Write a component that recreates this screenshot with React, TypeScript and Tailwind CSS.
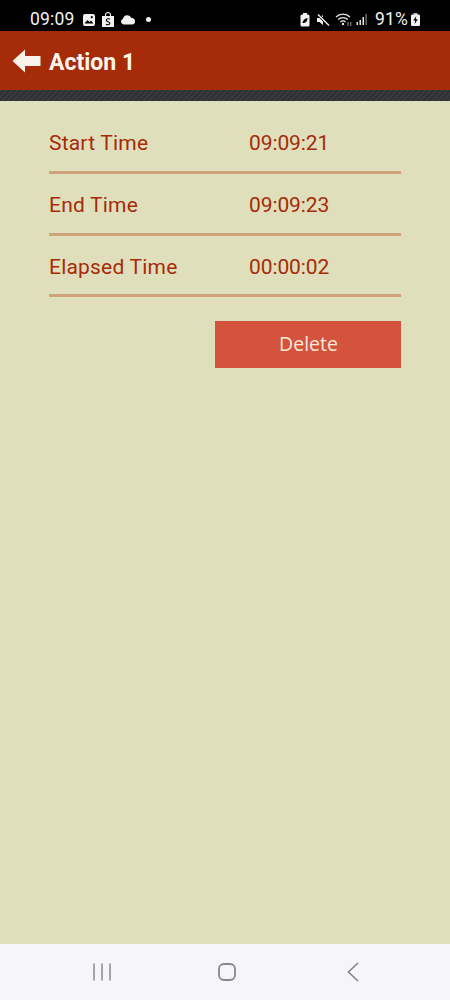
import React from "react";

function StatusBar() {
  return (
    <div className="h-[31px] bg-black text-[#f2f2f2] flex items-center pt-[8px] pl-[30px] pr-[30px] font-['Roboto',sans-serif]">
      <span className="text-[17.5px] leading-none tracking-[0.2px]">09:09</span>
      <div className="flex items-center ml-[7px]">
        <svg width="14" height="14" viewBox="0 0 14 14">
          <rect x="1" y="1" width="12" height="12" rx="2" fill="#f2f2f2" />
          <path d="M2.5 10.5 L5.5 7 L7.5 9 L9 7.5 L11.5 10.5 Z" fill="#000" />
          <circle cx="9.8" cy="4.2" r="1.1" fill="#000" />
        </svg>
        <svg className="ml-[5px]" width="14" height="16" viewBox="0 0 14 16">
          <path d="M1 4 H13 V15 H1 Z" fill="#f2f2f2" />
          <path d="M4.5 4 V3 a2.5 2.5 0 0 1 5 0 V4" fill="none" stroke="#f2f2f2" strokeWidth="1.1" />
          <path d="M9 7.2 C8 6.4 5.3 6.5 5.3 8.2 C5.3 10 8.9 9.5 8.9 11.3 C8.9 13 6 13 5 12.2" fill="none" stroke="#000" strokeWidth="1.1" />
        </svg>
        <svg className="ml-[5px]" width="16" height="10" viewBox="0 0 16 10">
          <path d="M3.5 9.5 A3 3 0 0 1 3 3.7 A4.5 4.5 0 0 1 11.5 3 A3.3 3.3 0 0 1 12.5 9.5 Z" fill="#f2f2f2" />
        </svg>
        <span className="w-[5px] h-[5px] rounded-full bg-[#f2f2f2] ml-[10px]" />
      </div>
      <div className="flex items-center ml-auto">
        <svg width="10" height="14" viewBox="0 0 10 14">
          <rect x="3" y="0" width="4" height="2" fill="#f2f2f2" />
          <rect x="0.5" y="1.5" width="9" height="12" rx="1.5" fill="#f2f2f2" />
          <path d="M2.5 10 C3 7 5 5.5 7.5 5 C7.5 8 6 10 2.5 10 Z" fill="#000" />
        </svg>
        <svg className="ml-[6px]" width="14" height="14" viewBox="0 0 14 14">
          <path d="M1 5 H3.5 L7 2 V12 L3.5 9 H1 Z" fill="#f2f2f2" />
          <path d="M2 1.5 L13 12.5" stroke="#000" strokeWidth="3" />
          <path d="M2 1.5 L13 12.5" stroke="#f2f2f2" strokeWidth="1.4" />
        </svg>
        <svg className="ml-[5px]" width="19" height="15" viewBox="0 0 19 15">
          <path d="M1 5 A10 10 0 0 1 15 5" fill="none" stroke="#e8e8e8" strokeWidth="1.3" />
          <path d="M3.2 7.5 A7 7 0 0 1 12.8 7.5" fill="none" stroke="#e8e8e8" strokeWidth="1.3" />
          <path d="M5.4 10 A4 4 0 0 1 10.6 10" fill="none" stroke="#e8e8e8" strokeWidth="1.3" />
          <circle cx="8" cy="12" r="1.2" fill="#e8e8e8" />
          <path d="M13 10 V14 M15.8 14 V10" stroke="#999" strokeWidth="1" />
        </svg>
        <svg className="ml-[2px]" width="12" height="13" viewBox="0 0 12 13">
          <rect x="0.5" y="9" width="1.5" height="3" fill="#e8e8e8" />
          <rect x="3.5" y="7" width="1.5" height="5" fill="#e8e8e8" />
          <rect x="6.5" y="4" width="1.5" height="8" fill="#e8e8e8" />
          <rect x="9.5" y="1" width="1.2" height="11" fill="#888" />
        </svg>
        <span className="text-[17.5px] leading-none ml-[7px] tracking-[0.2px]">91%</span>
        <svg className="ml-[3px]" width="9" height="13" viewBox="0 0 9 13">
          <rect x="2.5" y="0" width="4" height="2" fill="#bbb" />
          <rect x="0" y="1.5" width="9" height="11.5" rx="1.3" fill="#f2f2f2" />
          <path d="M5.3 3 L2.3 7.5 H4.2 L3.7 11 L6.8 6.2 H4.8 Z" fill="#000" />
        </svg>
      </div>
    </div>
  );
}

function Row({ label, value, h }: { label: string; value: string; h: string }) {
  return (
    <div className={`${h} flex flex-col`}>
      <div className="flex-1 flex items-center pt-[5px] text-[21px] text-[#a62b08]">
        <span className="w-[200px] tracking-[0.2px]">{label}</span>
        <span className="tracking-[-0.1px]">{value}</span>
      </div>
      <div className="h-[3px] bg-[#cfa27c]" />
    </div>
  );
}

export default function App() {
  return (
    <div className="w-[450px] h-[1000px] flex flex-col bg-[#e0dfbb] font-['Roboto',sans-serif] overflow-hidden">
      <StatusBar />
      <div className="h-[59px] bg-[#a62b08] flex items-center pl-[12px]">
        <svg width="29" height="24" viewBox="0 0 29 24">
          <path d="M0.5 12 L13 0.5 V7 H28.5 V17 H13 V23.5 Z" fill="#f7f3ea" />
        </svg>
        <span className="ml-[8px] pt-[4px] text-[#fbf5ec] font-bold text-[23px] leading-none">Action 1</span>
      </div>
      <div className="h-[11px] bg-[#33363a] bg-[repeating-linear-gradient(135deg,#37393d_0px,#37393d_2px,#2f3135_2px,#2f3135_4px)]" />
      <div className="flex-1 px-[49px] pt-[11px]">
        <Row h="h-[62px]" label="Start Time" value="09:09:21" />
        <Row h="h-[62px]" label="End Time" value="09:09:23" />
        <Row h="h-[61px]" label="Elapsed Time" value="00:00:02" />
        <div className="flex justify-end mt-[24px]">
          <button className="w-[186px] h-[47px] pb-[2px] pl-[1px] bg-[#d3533d] text-[#f8e8dc] text-[19.5px] flex items-center justify-center font-['Open_Sans',sans-serif]">
            Delete
          </button>
        </div>
      </div>
      <div className="h-[56px] bg-[#f6f6fa] flex items-center pl-[92px] pb-[1px]">
        <svg width="20" height="18" viewBox="0 0 20 18">
          <path d="M2 0.5 V17.5 M10 0.5 V17.5 M18 0.5 V17.5" stroke="#8f8f93" strokeWidth="1.6" />
        </svg>
        <svg className="ml-[106px]" width="18" height="18" viewBox="0 0 18 18">
          <rect x="1" y="1" width="16" height="16" rx="5" fill="none" stroke="#87878b" strokeWidth="1.8" />
        </svg>
        <svg className="ml-[111px]" width="12" height="20" viewBox="0 0 12 20">
          <path d="M11 1 L1.5 10 L11 19" fill="none" stroke="#87878b" strokeWidth="1.7" />
        </svg>
      </div>
    </div>
  );
}
